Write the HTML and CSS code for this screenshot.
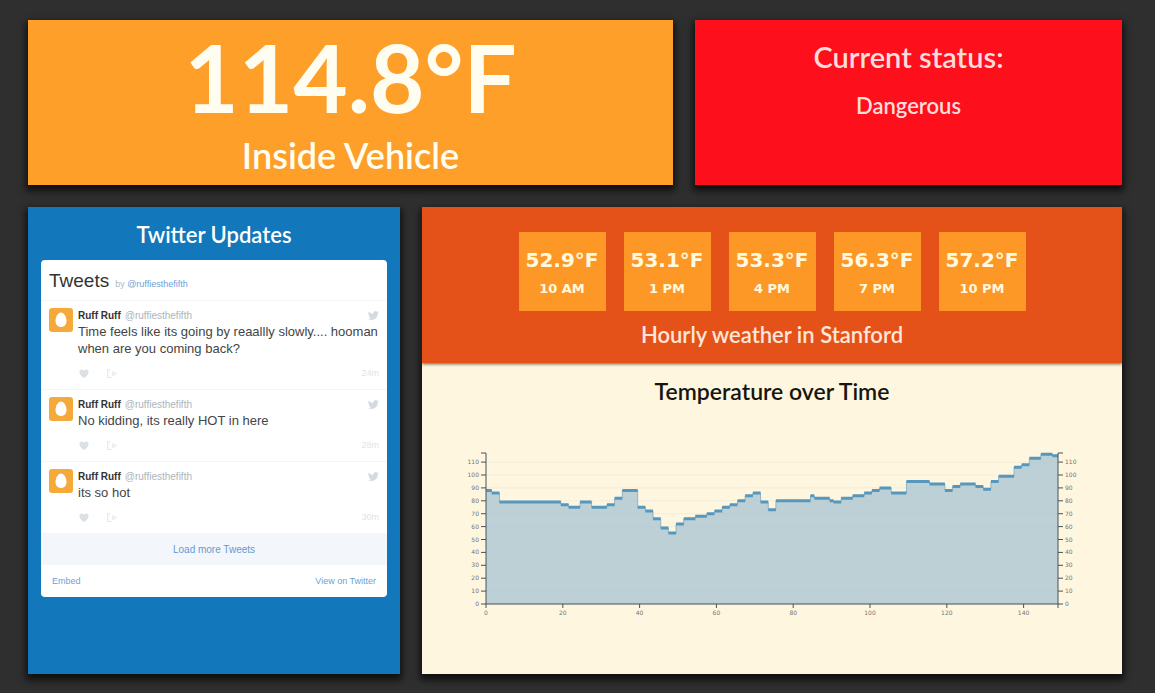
FILE: index.html
```html
<!DOCTYPE html>
<html lang="en">
<head>
<meta charset="utf-8">
<meta name="viewport" content="width=device-width, initial-scale=1">
<title>Vehicle Temperature Dashboard</title>
<link rel="stylesheet" href="styles.css">
</head>
<body>
<svg class="sprite" aria-hidden="true">
  <symbol id="egg" viewBox="0 0 24 24"><rect width="24" height="24" rx="3" fill="#f6a93b"/><path d="M12 4.500c3 0 5.500 4.500 5.500 8.500 0 3.700-2.400 6-5.500 6s-5.500-2.300-5.500-6c0-4 2.500-8.500 5.500-8.500z" fill="#fff"/></symbol>
  <symbol id="heart" viewBox="0 0 12 12"><path d="M6 11C2.500 8.600 1 6.500 1 4.300 1 2.500 2.200 1.500 3.500 1.500c1.100 0 2 .6 2.500 1.600.5-1 1.400-1.600 2.500-1.600C9.800 1.500 11 2.500 11 4.300 11 6.500 9.500 8.600 6 11z" fill="#dbe0e4"/></symbol>
  <symbol id="share" viewBox="0 0 14 12"><path d="M5 1.500H2v9h4.500M8 4l4 2-4 2.500z" fill="none" stroke="#dde2e6"/></symbol>
  <symbol id="bird" viewBox="0 0 24 24"><path d="M23.600 4.800c-.9.400-1.800.7-2.800.8 1-.6 1.800-1.600 2.200-2.700-1 .6-2 1-3.100 1.200A4.900 4.900 0 0 0 11.500 8.600C7.400 8.400 3.800 6.400 1.400 3.500c-1.300 2.200-.7 5.100 1.500 6.600-.8 0-1.600-.2-2.200-.6 0 2.300 1.600 4.400 3.900 4.900-.7.200-1.500.2-2.200.1.600 2 2.400 3.400 4.600 3.400A9.900 9.900 0 0 1 0 19.500 13.900 13.900 0 0 0 7.500 21.700c9.100 0 14.300-7.700 14-14.600 1-.6 1.600-1.400 2.100-2.300z" fill="#d3dae0"/></symbol>
</svg>
<main class="dashboard">
  <section class="panel vehicle">
    <p class="reading">114.8°F</p>
    <h1 class="caption">Inside Vehicle</h1>
  </section>
  <section class="panel status">
    <h2 class="status-title">Current status:</h2>
    <p class="status-value">Dangerous</p>
  </section>
  <section class="panel twitter">
    <h2 class="panel-title">Twitter Updates</h2>
    <div class="timeline">
      <header class="timeline-head"><h3>Tweets</h3><span>by <a href="#">@ruffiesthefifth</a></span></header>
      <article class="tweet">
        <svg class="avatar"><use href="#egg"/></svg>
        <div class="tweet-body">
          <div class="author"><b>Ruff Ruff</b><span>@ruffiesthefifth</span><svg class="bird"><use href="#bird"/></svg></div>
          <p>Time feels like its going by reaallly slowly.... hooman when are you coming back?</p>
          <div class="actions"><button aria-label="Like"><svg><use href="#heart"/></svg></button><button aria-label="Share"><svg><use href="#share"/></svg></button><time>24m</time></div>
        </div>
      </article>
      <article class="tweet">
        <svg class="avatar"><use href="#egg"/></svg>
        <div class="tweet-body">
          <div class="author"><b>Ruff Ruff</b><span>@ruffiesthefifth</span><svg class="bird"><use href="#bird"/></svg></div>
          <p>No kidding, its really HOT in here</p>
          <div class="actions"><button aria-label="Like"><svg><use href="#heart"/></svg></button><button aria-label="Share"><svg><use href="#share"/></svg></button><time>28m</time></div>
        </div>
      </article>
      <article class="tweet">
        <svg class="avatar"><use href="#egg"/></svg>
        <div class="tweet-body">
          <div class="author"><b>Ruff Ruff</b><span>@ruffiesthefifth</span><svg class="bird"><use href="#bird"/></svg></div>
          <p>its so hot</p>
          <div class="actions"><button aria-label="Like"><svg><use href="#heart"/></svg></button><button aria-label="Share"><svg><use href="#share"/></svg></button><time>30m</time></div>
        </div>
      </article>
      <button class="more">Load more Tweets</button>
      <footer class="timeline-foot"><a href="#">Embed</a><a href="#">View on Twitter</a></footer>
    </div>
  </section>
  <section class="panel weather">
    <div class="forecast">
      <ul class="hours">
        <li><b>52.9°F</b><span>10 AM</span></li>
        <li><b>53.1°F</b><span>1 PM</span></li>
        <li><b>53.3°F</b><span>4 PM</span></li>
        <li><b>56.3°F</b><span>7 PM</span></li>
        <li><b>57.2°F</b><span>10 PM</span></li>
      </ul>
      <h2 class="panel-title">Hourly weather in Stanford</h2>
    </div>
    <div class="history">
      <h2 class="panel-title">Temperature over Time</h2>
      <svg class="chart" id="chart" viewBox="0 0 700 190" role="img" aria-label="Temperature over time"></svg>
    </div>
  </section>
</main>
<script src="chart.js"></script>
</body>
</html>
```
FILE: styles.css
```css
* { box-sizing: border-box; }
body {
  margin: 0;
  min-height: 100vh;
  background: #2f2f2f;
  color: #fff;
  font-family: Lato, "Liberation Sans", sans-serif;
}
h1, h2, h3, p, ul { margin: 0; padding: 0; }
a { color: #6d9fd6; text-decoration: none; }
button { border: 0; padding: 0; background: none; font: inherit; cursor: pointer; }
.sprite { position: absolute; width: 0; height: 0; }

.dashboard {
  display: grid;
  grid-template-columns: 372fr 251fr 427fr;
  grid-template-rows: 165px auto;
  gap: 22px;
  min-height: 100vh;
  padding: 20px 33px 19px 28px;
}
.panel { box-shadow: 0 4px 7px 2px rgba(0, 0, 0, .7); text-align: center; }
.vehicle { grid-column: 1 / 3; background: #fd9f28; color: #fffdf0; }
.status { background: #fd0f1b; color: #ffdcdc; }
.twitter { background: #1277bb; padding: 12px 13px; }
.weather { grid-column: 2 / 4; display: flex; flex-direction: column; background: #fff6df; }

.reading { font-size: 94px; font-weight: 700; line-height: 113px; }
.caption { font-size: 36px; font-weight: 600; line-height: 44px; }
.status-title { padding-top: 20px; font-size: 29px; font-weight: 600; line-height: 34px; }
.status-value { padding-top: 18px; font-size: 22px; font-weight: 600; line-height: 28px; }
.panel-title { font-size: 22px; font-weight: 600; line-height: 32px; }
.history .panel-title { font-size: 23px; }

.timeline {
  margin-top: 9px;
  border-radius: 4px;
  background: #fff;
  color: #444;
  font-family: "Liberation Sans", Arial, sans-serif;
  text-align: left;
}
.timeline-head { display: flex; align-items: baseline; gap: 6px; height: 40px; padding: 9px 8px 0; font-size: 9px; color: #aab8c2; }
.timeline-head h3 { font-size: 19px; font-weight: 400; line-height: 24px; color: #333; }
.tweet { display: flex; gap: 5px; padding: 7px 8px 10px; border-top: 1px solid #f3f5f7; }
.avatar { flex: none; width: 24px; height: 24px; }
.tweet-body { flex: 1; }
.author { display: flex; align-items: center; gap: 4px; height: 15px; font-size: 10px; color: #aeb4b9; }
.author b { color: #333; }
.author svg { width: 11px; height: 11px; margin-left: auto; }
.tweet p { font-size: 13px; line-height: 17px; }
.actions { display: flex; align-items: center; gap: 16px; height: 12px; margin-top: 10px; font-size: 9px; color: #dfe3e7; }
.actions svg { display: block; width: 12px; height: 11px; }
.actions time { margin-left: auto; }
.more { display: block; width: 100%; height: 32px; background: #f3f7fb; color: #6699d2; font-size: 10px; }
.timeline-foot { display: flex; justify-content: space-between; padding: 9px 11px; font-size: 9px; line-height: 14px; }

.forecast { padding: 25px 0 12px; background: #e4521a; color: #ffe6d8; box-shadow: 0 1px 3px rgba(60, 50, 30, .8); }
.hours { display: flex; justify-content: center; gap: 18px; margin-bottom: 8px; list-style: none; }
.hours li {
  display: flex;
  flex-direction: column;
  width: 87px;
  padding: 14px 0 8px;
  background: #fd9827;
  color: #fff9df;
  font-family: "DejaVu Sans", sans-serif;
  font-weight: 700;
}
.hours b { font-size: 20px; line-height: 29px; }
.hours span { font-size: 13px; line-height: 28px; }
.history { padding-top: 12px; color: #17150f; }
.chart { display: block; width: 100%; margin-top: 37px; }
.area { fill: #bdd0d6; }
.line { fill: none; stroke: #5597bd; stroke-width: 3; }
.step { fill: none; stroke: #8fb5c8; stroke-width: 1; }
.grid { stroke: #b4cad3; stroke-opacity: .2; }
.axis { fill: none; stroke: #45525a; }
.tick { fill: #77756d; font: 6px "DejaVu Sans", sans-serif; }
```
FILE: chart.js
```js
const chart = document.getElementById("chart");
const left = 64, right = 636, base = 160;
const unitY = 1.29, unitX = 3.84;
// [start index, temperature] of each run of equal readings
const runs = [
  [0, 88], [1.5, 86], [3.5, 79], [19.5, 77], [21.5, 75], [24.5, 79], [27.5, 75], [31.5, 77],
  [33.5, 82], [35.5, 88], [39.5, 75], [41.5, 72], [43.5, 66], [45.5, 59], [47.5, 55],
  [49.5, 62], [51.5, 66], [54.5, 68], [57.5, 70], [59.5, 72], [61.5, 75], [63.5, 77],
  [65.5, 80], [67.5, 84], [69.5, 86], [71.5, 79], [73.5, 73], [75.5, 80], [84.5, 84],
  [85.5, 82], [89.5, 80], [90.5, 79], [92.5, 82], [95.5, 84], [98.5, 86], [100.5, 88],
  [102.5, 90], [105.5, 86], [109.5, 95], [115.5, 93], [119.5, 88], [121.5, 91],
  [123.5, 93], [127.5, 91], [129.5, 89], [131.5, 95], [133.5, 99], [137.5, 106],
  [139.5, 108], [141.5, 113], [144.5, 116], [147.5, 115], [149, 115]
];
const x = v => Math.min(right, left + v * unitX);
const y = v => base - v * unitY;
let outline = "", flats = "", grid = "", ticks = "", labels = "";
runs.slice(0, -1).forEach(([at, value], i) => {
  const end = runs[i + 1][0];
  outline += `${i ? "L" : "M"}${x(at)} ${y(value)}H${x(end)}`;
  flats += `M${x(at)} ${y(value)}H${x(end)}`;
});
for (let v = 0; v <= 110; v += 10) {
  grid += `M${left} ${y(v)}H${right}`;
  ticks += `M${left - 5} ${y(v)}h5M${right} ${y(v)}h5`;
  labels += `<text x="${left - 7}" y="${y(v) + 2}" text-anchor="end">${v}</text><text x="${right + 7}" y="${y(v) + 2}">${v}</text>`;
}
for (let v = 0; v <= 140; v += 20) {
  ticks += `M${x(v)} ${base}v4`;
  labels += `<text x="${x(v)}" y="${base + 11}" text-anchor="middle">${v}</text>`;
}
chart.innerHTML = `<path class="area" d="${outline}V${base}H${left}Z"/>
<path class="grid" d="${grid}"/>
<path class="step" d="${outline}"/><path class="line" d="${flats}"/>
<path class="axis" d="M${left - 5} 9H${left}V${base}H${right}V9h5M${right} ${base}v4${ticks}"/>
<g class="tick">${labels}</g>`;
```
